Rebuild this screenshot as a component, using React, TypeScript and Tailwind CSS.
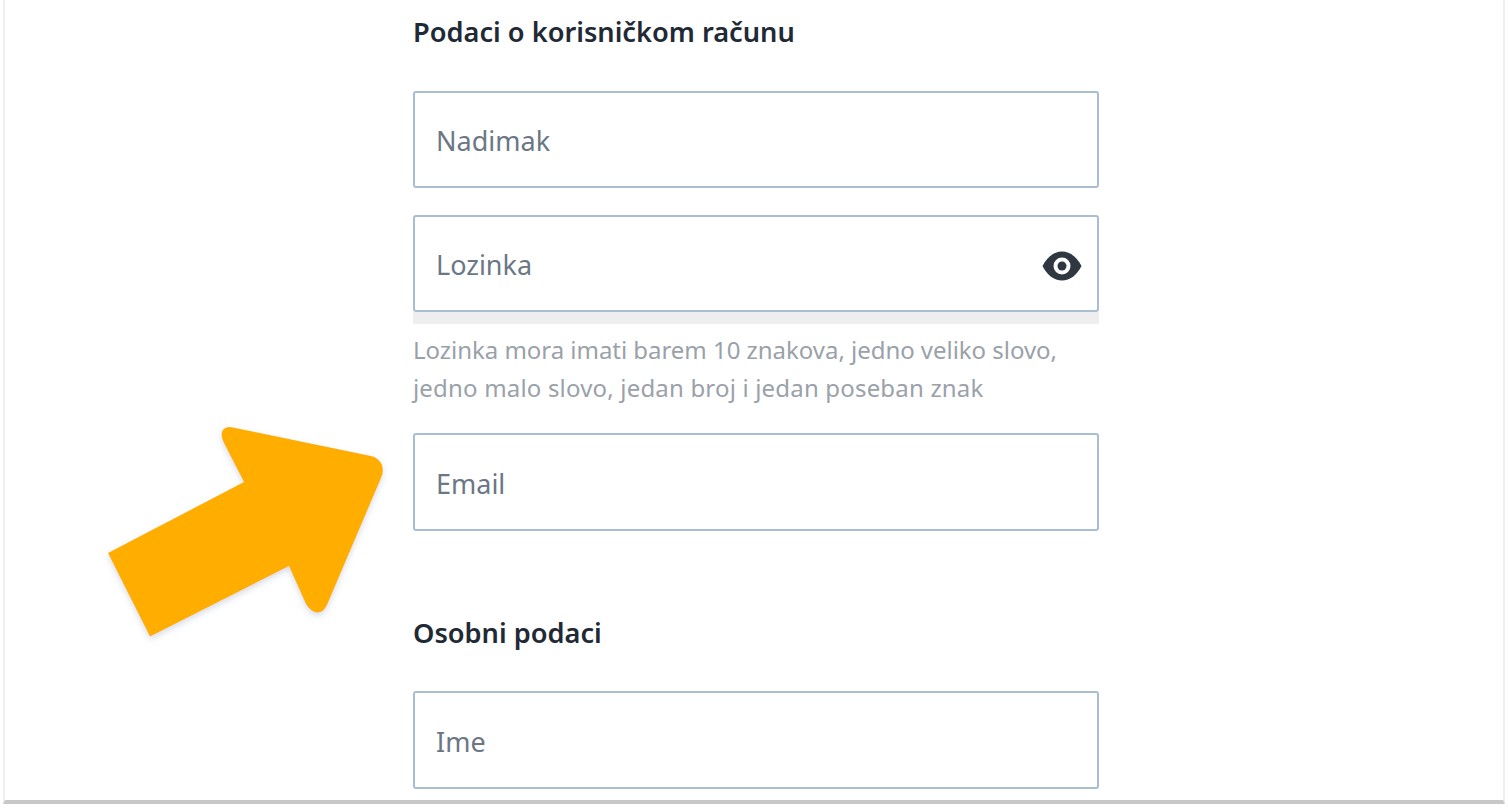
const FONT = "font-['Noto_Sans','Open_Sans',sans-serif]"

function Field({ label, eye, tall }: { label: string; eye?: boolean; tall?: boolean }) {
  return (
    <div className={`flex ${tall ? "h-[98px]" : "h-[97px]"} items-center justify-between rounded-[3px] border-2 border-[#a9bdd3] bg-white pl-[21px] pr-[15px]`}>
      <span className="pt-[2px] text-[27px] leading-none text-[#6b7785]">{label}</span>
      {eye && (
        <svg className="mt-[4px]" width="40" height="30" viewBox="0 0 40 30">
          <path d="M0.500 15C5 6 12 0.500 20 0.500s15 5.500 19.500 14.500c-4.500 9-11.500 14.500-19.500 14.500S5 24 0.500 15z" fill="#2f3840" />
          <circle cx="20" cy="15" r="8.500" fill="#fff" />
          <circle cx="20" cy="15" r="4.500" fill="#2f3840" />
        </svg>
      )}
    </div>
  )
}

function Arrow() {
  return (
    <svg className="absolute left-[95px] top-[415px]" width="300" height="235" viewBox="95 415 300 235">
      <defs>
        <filter id="arrow-shadow" x="-10%" y="-10%" width="120%" height="120%">
          <feDropShadow dx="0" dy="3" stdDeviation="3" floodColor="#8a9bb0" floodOpacity="0.35" />
        </filter>
      </defs>
      <path
        d="M108 553L244 482L223.500 442Q220 434 223 430Q226 426 233 427.500L371 456Q379 458 382 465Q384 472 381 478L327 605Q323 613 317 612.500Q311 612 306 604L289 566L150 636.500Z"
        fill="#ffae00"
        filter="url(#arrow-shadow)"
      />
    </svg>
  )
}

export default function App() {
  return (
    <div className={`relative h-[808px] w-full overflow-hidden bg-white ${FONT}`}>
      <div className="mx-[3px] h-[804px] border-x-2 border-b-4 border-x-[#efefef] border-b-[#c8c8c8] bg-white">
        <div className="ml-[408px] w-[686px]">
          <h2 className="flex h-[64px] items-center text-[27.2px] font-semibold text-[#1f2a36]">Podaci o korisničkom računu</h2>
          <div className="mt-[27px] flex flex-col gap-[27px]">
            <Field label="Nadimak" />
            <div>
              <Field label="Lozinka" eye />
              <div className="h-[12px] bg-[#eeeeee]" />
              <p className="mt-[7px] text-[24px] leading-[38px] text-[#9aa1a9]">
                <span className="tracking-[-0.035px]">Lozinka mora imati barem 10 znakova, jedno veliko slovo,</span>
                <br />
                <span className="tracking-[0.18px]">jedno malo slovo, jedan broj i jedan poseban znak</span>
              </p>
            </div>
          </div>
          <div className="mt-[26px]">
            <Field label="Email" tall />
          </div>
          <h2 className="mt-[79px] flex h-[46px] items-center text-[27.2px] font-semibold text-[#1f2a36]">Osobni podaci</h2>
          <div className="mt-[35px]">
            <Field label="Ime" tall />
          </div>
        </div>
      </div>
      <Arrow />
    </div>
  )
}
